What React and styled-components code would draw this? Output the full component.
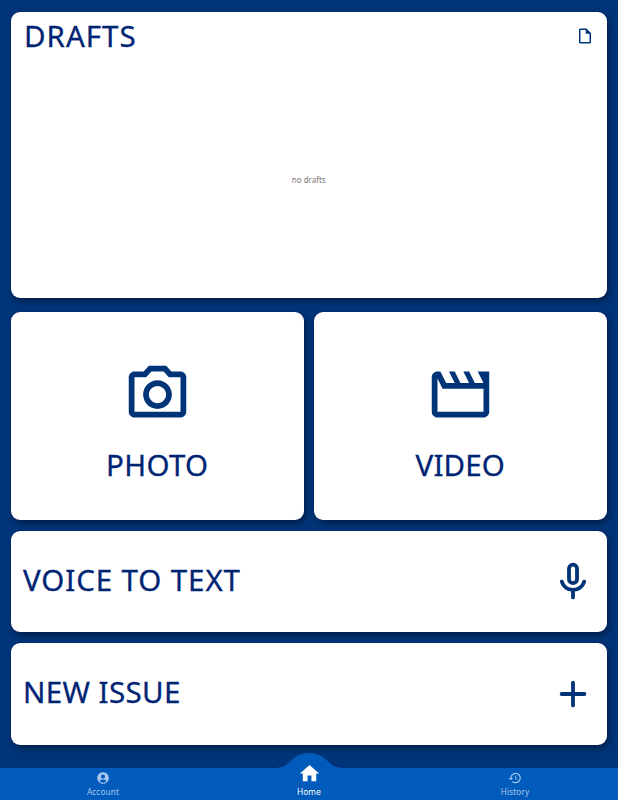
import React from "react";
import styled, { createGlobalStyle } from "styled-components";
import {
  MdOutlineCameraAlt,
  MdOutlineInsertDriveFile,
  MdAccountCircle,
  MdHome,
  MdHistory,
} from "react-icons/md";

const GlobalStyle = createGlobalStyle`
  * { box-sizing: border-box; }
  body {
    margin: 0;
    background: #003478;
    font-family: "Noto Sans", sans-serif;
  }
`;

const Screen = styled.div`
  display: flex;
  flex-direction: column;
  width: 618px;
  height: 800px;
  background: #003478;
  overflow: hidden;
`;

const Content = styled.main`
  flex: 1;
  display: flex;
  flex-direction: column;
  padding: 12px 11.5px 0 11px;
`;

const Card = styled.section`
  display: flex;
  background: #fff;
  border-radius: 9px;
  box-shadow: 0 0 1px #000c60, 2px 3px 6px rgba(0, 0, 0, 0.4);
  color: #003478;
`;

const DraftsCard = styled(Card)`
  flex-direction: column;
  height: 286px;
  margin-bottom: 14px;
`;

const CardHeader = styled.header`
  display: flex;
  align-items: center;
  justify-content: space-between;
  height: 48px;
  padding: 0 12.5px 0 13px;
`;

const Empty = styled.p`
  margin: 0;
  padding-top: 113px;
  text-align: center;
  font-size: 8px;
  line-height: 14px;
  color: #777;
`;

const Title = styled.h2`
  margin: 0;
  padding-bottom: ${(props) => props.$lift || "0"};
  font-size: 29.5px;
  line-height: 40px;
  font-weight: 400;
  letter-spacing: ${(props) => props.$spacing || "0"};
  white-space: nowrap;
  color: #002474;
  -webkit-text-stroke: 0.3px #002474;
`;

const Tiles = styled.div`
  display: flex;
  gap: 10.5px;
  margin-bottom: 11px;
`;

const Tile = styled(Card)`
  flex: 1;
  flex-direction: column;
  align-items: center;
  height: 207.5px;
  padding-top: 48px;

  svg {
    display: block;
    margin-bottom: 15.5px;
  }
`;

const ActionCard = styled(Card)`
  align-items: center;
  justify-content: space-between;
  height: 101.5px;
  margin-bottom: 11px;
  padding: 0 18.5px 0 12px;
`;

const NavBar = styled.nav`
  position: relative;
  display: grid;
  grid-template-columns: repeat(3, 1fr);
  height: 32px;
  background: #005bbb;
`;

const Bump = styled.svg`
  position: absolute;
  left: 273px;
  top: -15px;
`;

const NavItem = styled.a`
  position: relative;
  display: flex;
  flex-direction: column;
  align-items: center;
  justify-content: flex-end;
  min-height: 0;
  padding-bottom: 2px;
  font-size: 8.3px;
  line-height: 13px;
  color: ${(props) => (props.$active ? "#fff" : "#a5c6ed")};

  svg {
    flex-shrink: 0;
  }
`;

const Label = styled.span`
  height: 13px;
  line-height: 13px;
  letter-spacing: 0.1px;
`;

const Clapper = () => (
  <svg width="69" height="69" viewBox="0 0 24 24" fill="currentColor">
    <path d="M4 6.47L5.76 10H20v8H4V6.47M22 4h-4l2 4h-3l-2-4h-2l2 4h-3l-2-4H8l2 4H7L5 4H4c-1.1 0-2 .9-2 2v12c0 1.1.9 2 2 2h16c1.1 0 2-.9 2-2V4z" />
  </svg>
);

const Mic = () => (
  <svg
    width="30"
    height="38"
    viewBox="0 0 30 38"
    fill="none"
    stroke="currentColor"
    strokeWidth="3.8"
    strokeLinecap="round"
  >
    <rect x="11" y="2.6" width="8" height="18.6" rx="4" />
    <path d="M3.8 19.6A11.7 11.7 0 0 0 26.2 19.6M15 28.4v7" />
  </svg>
);

const Plus = () => (
  <svg
    width="30"
    height="30"
    viewBox="0 0 30 30"
    fill="none"
    stroke="currentColor"
    strokeWidth="3.8"
    strokeLinecap="round"
  >
    <path d="M15 3.6v22.8M3.6 15h22.8" />
  </svg>
);

export default function App() {
  return (
    <Screen>
      <GlobalStyle />
      <Content>
        <DraftsCard>
          <CardHeader>
            <Title $spacing="1px" $lift="1px">DRAFTS</Title>
            <MdOutlineInsertDriveFile size={18} />
          </CardHeader>
          <Empty>no drafts</Empty>
        </DraftsCard>

        <Tiles>
          <Tile>
            <MdOutlineCameraAlt size={69} />
            <Title $spacing="0.35px">PHOTO</Title>
          </Tile>
          <Tile>
            <Clapper />
            <Title $spacing="0.15px">VIDEO</Title>
          </Tile>
        </Tiles>

        <ActionCard>
          <Title $spacing="0.9px" $lift="2px">VOICE TO TEXT</Title>
          <Mic />
        </ActionCard>
        <ActionCard>
          <Title $spacing="0.4px" $lift="3px">NEW ISSUE</Title>
          <Plus />
        </ActionCard>
      </Content>

      <NavBar>
        <Bump width="72" height="16" viewBox="0 0 72 16" fill="#005bbb">
          <path d="M0 16V15C11 15 13 12 18 7.5C23 3 28 0 36 0S49 3 54 7.5C59 12 61 15 72 15V16Z" />
        </Bump>
        <NavItem>
          <MdAccountCircle size={14} />
          <Label>Account</Label>
        </NavItem>
        <NavItem $active>
          <MdHome size={23} />
          <Label>Home</Label>
        </NavItem>
        <NavItem>
          <MdHistory size={14} />
          <Label>History</Label>
        </NavItem>
      </NavBar>
    </Screen>
  );
}
